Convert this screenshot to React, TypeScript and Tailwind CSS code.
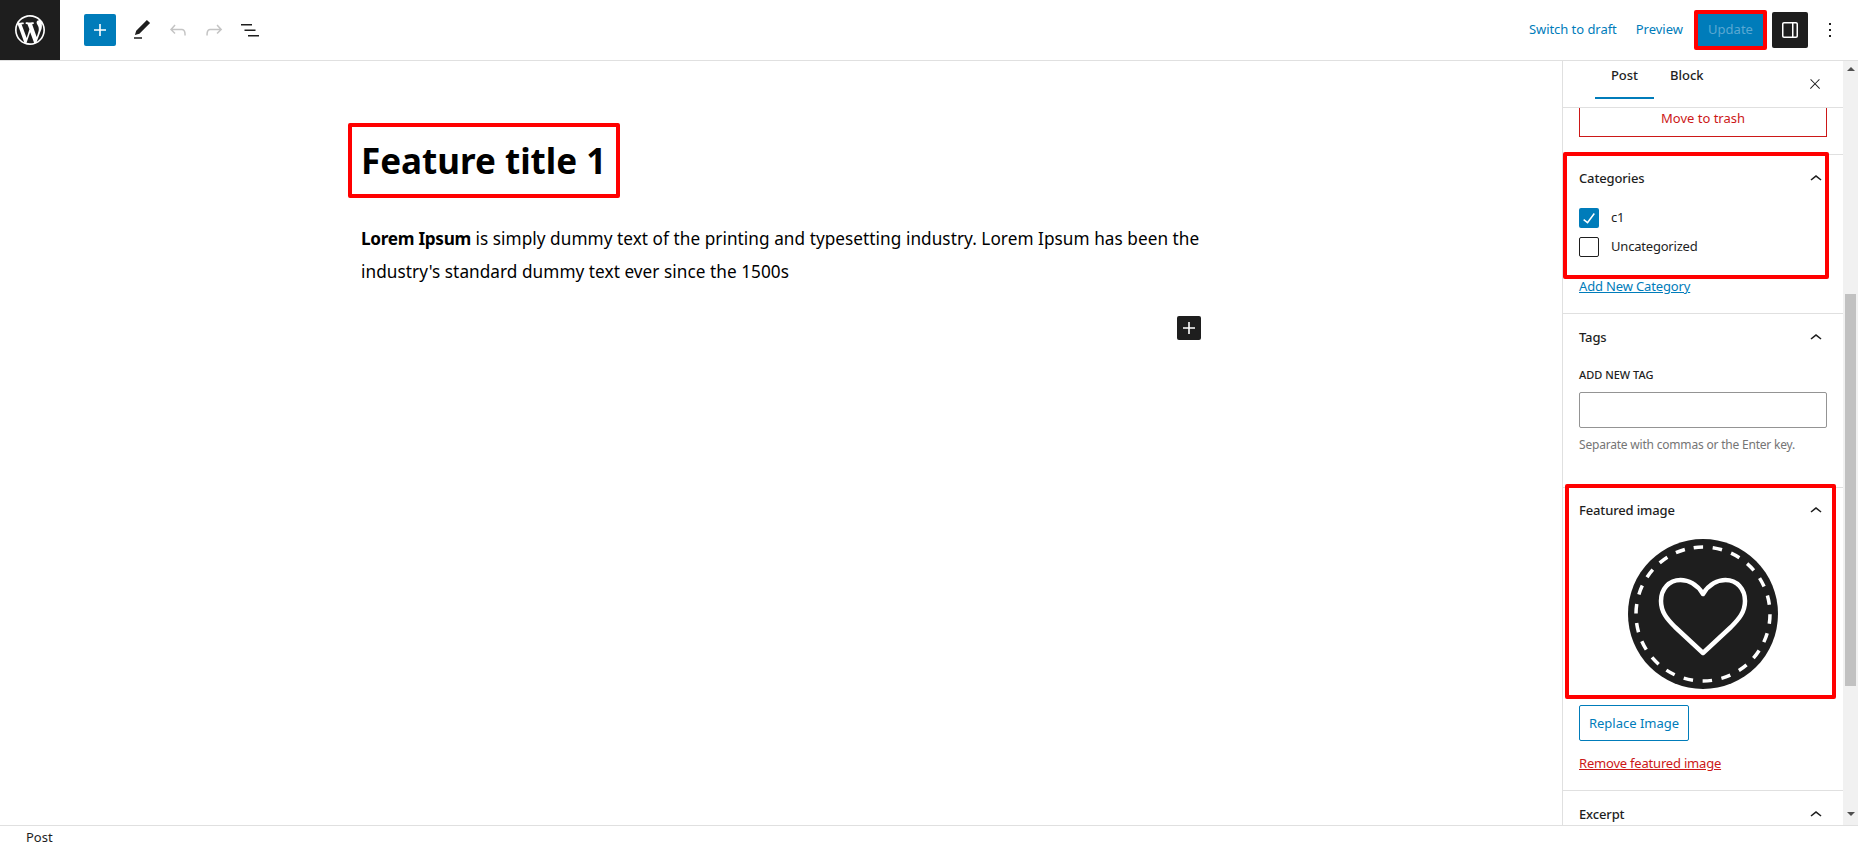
import { ReactNode } from "react"

const P = {
  wp: "M20 10c0-5.51-4.49-10-10-10C4.48 0 0 4.49 0 10c0 5.52 4.48 10 10 10 5.51 0 10-4.48 10-10zM7.78 15.37L4.37 6.22c.55-.02 1.17-.08 1.17-.08.5-.06.44-1.13-.06-1.11 0 0-1.45.11-2.37.11-.18 0-.37 0-.58-.01C4.12 2.69 6.87 1.11 10 1.11c2.33 0 4.45.87 6.05 2.34-.68-.11-1.65.39-1.65 1.58 0 .74.45 1.36.9 2.1.35.61.55 1.36.55 2.46 0 1.49-1.4 5-1.4 5l-3.03-8.37c.54-.02.82-.17.82-.17.5-.05.44-1.25-.06-1.22 0 0-1.44.12-2.38.12-.87 0-2.33-.12-2.33-.12-.5-.03-.56 1.2-.06 1.22l.92.08 1.26 3.41zM17.41 10c.24-.64.74-1.87.43-4.25.7 1.29 1.05 2.71 1.05 4.25 0 3.29-1.73 6.24-4.4 7.78.97-2.59 1.94-5.2 2.92-7.78zM6.1 18.09C3.12 16.65 1.11 13.53 1.11 10c0-1.3.23-2.48.72-3.59C3.25 10.3 4.67 14.2 6.1 18.09zm4.03-6.63l2.58 6.98c-.86.29-1.76.45-2.71.45-.79 0-1.57-.11-2.29-.33.81-2.38 1.62-4.74 2.42-7.1z",
  plus: "M18 11.2h-5.2V6h-1.6v5.2H6v1.6h5.2V18h1.6v-5.2H18z",
  pen: "M20.1 5.1L16.9 2 6.2 12.7l-1.3 4.4 4.5-1.3L20.1 5.1zM4 20.8h8v-1.5H4v1.5z",
  undo: "M18.3 11.7c-.6-.6-1.4-.9-2.3-.9H6.7l2.9-3.3-1.1-1-4.5 5L8.5 16l1-1-2.7-2.7H16c.5 0 .9.2 1.3.5 1 1 1 3.4 1 4.5v.3h1.5v-.2c0-1.5 0-4.3-1.5-5.7z",
  redo: "M15.6 6.5l-1.1 1 2.9 3.3H8c-.9 0-1.7.3-2.3.9-1.4 1.5-1.4 4.2-1.4 5.6v.2h1.5v-.3c0-1.1 0-3.5 1-4.5.3-.3.7-.5 1.3-.5h9.2L14.5 15l1.1 1.1 4.6-4.6-4.6-5z",
  list: "M3 6h11v1.5H3V6zm3.5 5.5h11V13h-11v-1.5zM21 17H10v1.5h11V17z",
  side: "M18 4H6c-1.1 0-2 .9-2 2v12c0 1.1.9 2 2 2h12c1.1 0 2-.9 2-2V6c0-1.1-.9-2-2-2zm-4 14.5H6c-.3 0-.5-.2-.5-.5V6c0-.3.2-.5.5-.5h8v13zm4.5-.5c0 .3-.2.5-.5.5h-2.5v-13H18c.3 0 .5.2.5.5v12z",
  dots: "M13 19h-2v-2h2v2zm0-6h-2v-2h2v2zm0-6h-2V5h2v2z",
  close: "M13 11.8l6.1-6.3-1-1-6.1 6.2-6.1-6.2-1 1 6.1 6.3-6.5 6.7 1 1 6.5-6.6 6.5 6.6 1-1z",
  up: "M6.5 12.4L12 8l5.5 4.4-.9 1.2L12 10l-4.5 3.6-1-1.2z",
  check: "M16.7 7.1l-6.3 8.5-3.3-2.5-.9 1.2 4.5 3.4L17.9 8z",
}

function Icon({ d, size = 24, className = "" }: { d: string; size?: number; className?: string }) {
  return (
    <svg viewBox="0 0 24 24" width={size} height={size} className={className} fill="currentColor">
      <path d={d} />
    </svg>
  )
}

function RedBox({ className }: { className: string }) {
  return <div className={`pointer-events-none absolute rounded-[2px] border-[4px] border-[#ff0000] ${className}`} />
}

function PanelHead({ title, className = "" }: { title: string; className?: string }) {
  return (
    <div className={`flex items-center justify-between ${className}`}>
      <span className="text-[13px] font-medium tracking-[-0.15px] text-[#1e1e1e]">{title}</span>
      <Icon d={P.up} className="mr-[-1px] text-[#1e1e1e]" />
    </div>
  )
}

function Check({ label, checked }: { label: string; checked?: boolean }) {
  return (
    <div className="flex h-5 items-center gap-3">
      {checked ? (
        <span className="flex h-5 w-5 items-center justify-center rounded-[2px] bg-[#007cba] text-white">
          <Icon d={P.check} size={24} className="shrink-0" />
        </span>
      ) : (
        <span className="h-5 w-5 rounded-[2px] border border-[#1e1e1e] bg-white" />
      )}
      <span className="text-[13px] tracking-[-0.2px] text-[#1e1e1e]">{label}</span>
    </div>
  )
}

function Section({ children, className = "" }: { children: ReactNode; className?: string }) {
  return <section className={`border-b border-[#e0e0e0] px-4 ${className}`}>{children}</section>
}

function Badge() {
  return (
    <svg viewBox="0 0 150 150" width={150} height={150}>
      <circle cx="75" cy="75" r="75" fill="#1e1e1e" />
      <circle cx="75" cy="75" r="67" fill="none" stroke="#fff" strokeWidth="3.5" strokeDasharray="9.5 9.63" transform="rotate(-98 75 75)" />
      <path
        d="M75 55C69 45 60 41 52.500 41 41 41 33 50 33 62c0 11 6 18 14 26l28 26 28-26c8-8 14-15 14-26 0-12-8-21-19.500-21-7.500 0-16.500 4-22.500 14z"
        fill="none"
        stroke="#fff"
        strokeWidth="4.5"
        strokeLinejoin="round"
      />
    </svg>
  )
}

export default function App() {
  return (
    <div className="relative flex h-[850px] w-full flex-col overflow-hidden bg-white font-['Noto_Sans',sans-serif] text-[#1e1e1e]">
      <header className="flex h-[61px] shrink-0 items-center border-b border-[#e0e0e0] pb-px">
        <div className="flex h-[60px] w-[60px] items-center justify-center bg-[#1e1e1e] text-white">
          <svg viewBox="0 0 20 20" width={30} height={30} fill="currentColor">
            <path d={P.wp} />
          </svg>
        </div>
        <div className="ml-6 flex h-8 w-8 items-center justify-center rounded-[2px] bg-[#007cba] text-white">
          <Icon d={P.plus} />
        </div>
        <Icon d={P.pen} className="ml-[14px] text-[#1e1e1e]" />
        <Icon d={P.undo} className="ml-3 text-[#c4c4c4]" />
        <Icon d={P.redo} className="ml-3 text-[#c4c4c4]" />
        <Icon d={P.list} className="ml-3 text-[#1e1e1e]" />
        <div className="ml-auto flex items-center">
          <span className="text-[13px] tracking-[-0.05px] text-[#007cba]">Switch to draft</span>
          <span className="ml-[19px] text-[13px] text-[#007cba]">Preview</span>
          <span className="ml-[15px] flex h-9 w-[68px] items-center justify-center rounded-[2px] bg-[#007cba] pr-[3px] text-[13px] text-[#5aa8d2]">
            Update
          </span>
          <span className="ml-[6px] flex h-9 w-9 items-center justify-center rounded-[2px] bg-[#1e1e1e] text-white">
            <Icon d={P.side} />
          </span>
          <Icon d={P.dots} className="ml-[10px] mr-4 text-[#1e1e1e]" />
        </div>
      </header>

      <div className="flex min-h-0 flex-1">
        <main className="min-w-0 flex-1 pl-[361px] pt-[78px]">
          <div className="w-[840px]">
            <h1 className="text-[35px] font-bold leading-[44px] text-black">Feature title 1</h1>
            <p className="mt-[39px] text-[17.2px] leading-[33px] tracking-[0.05px] text-black">
              <strong className="font-bold tracking-[-0.3px]">Lorem Ipsum</strong> is simply dummy text of the printing
              and typesetting industry. Lorem Ipsum has been the
              <br />
              industry's standard dummy text ever since the 1500s
            </p>
            <div className="mt-[28px] flex justify-end">
              <span className="flex h-6 w-6 items-center justify-center rounded-[2px] bg-[#1e1e1e] text-white">
                <Icon d={P.plus} />
              </span>
            </div>
          </div>
        </main>

        <aside className="flex w-[296px] shrink-0 border-l border-[#e0e0e0]">
          <div className="min-w-0 flex-1 overflow-hidden">
            <div className="relative flex h-[47px] border-b border-[#e0e0e0] pl-[32px]">
              <div className="h-[38px] w-[59px] border-b-2 border-[#007cba] pt-[5px] text-center text-[13px] font-medium">
                Post
              </div>
              <div className="ml-[16px] pt-[5px] text-[13px] font-medium">Block</div>
              <Icon d={P.close} size={16} className="ml-auto mr-[20px] mt-[15px]" />
            </div>
            <Section className="h-[47px]">
              <div className="flex h-[29px] items-center justify-center border border-t-0 border-[#cc1818] pb-[7px] text-[13px] text-[#cc1818]">
                Move to trash
              </div>
            </Section>
            <Section className="h-[159px]">
              <PanelHead title="Categories" className="h-[48px]" />
              <div className="mt-[5px] flex flex-col gap-[9px]">
                <Check label="c1" checked />
                <Check label="Uncategorized" />
              </div>
              <a className="mt-[19px] block text-[13px] leading-[20px] tracking-[-0.15px] text-[#007cba] underline">
                Add New Category
              </a>
            </Section>
            <Section className="h-[174px]">
              <PanelHead title="Tags" className="h-[47px]" />
              <div className="mt-[6px] text-[11px] font-medium uppercase leading-[16px]">Add new tag</div>
              <div className="mt-[9px] h-9 rounded-[2px] border border-[#949494]" />
              <p className="mt-[9px] text-[12px] leading-[16px] tracking-[-0.2px] text-[#757575]">
                Separate with commas or the Enter key.
              </p>
            </Section>
            <Section className="h-[303px]">
              <PanelHead title="Featured image" className="h-[45px]" />
              <div className="mt-[6px] flex justify-center">
                <Badge />
              </div>
              <div className="mt-[16px] flex h-9 w-[110px] items-center justify-center rounded-[2px] border border-[#007cba] pt-px text-[13px] text-[#007cba]">
                Replace Image
              </div>
              <a className="mt-[12px] block text-[13px] leading-[20px] tracking-[-0.2px] text-[#cc1818] underline">
                Remove featured image
              </a>
            </Section>
            <div className="px-4">
              <PanelHead title="Excerpt" className="h-[48px]" />
            </div>
          </div>

          <div className="flex w-[15px] shrink-0 flex-col items-center bg-[#f1f1f1]">
            <span className="mt-[6px] h-0 w-0 border-x-[4px] border-b-[4px] border-x-transparent border-b-[#505050]" />
            <span className="mt-[223px] h-[392px] w-[11px] bg-[#c1c1c1]" />
            <span className="mt-[126px] h-0 w-0 border-x-[4px] border-t-[4px] border-x-transparent border-t-[#505050]" />
          </div>
        </aside>
      </div>

      <footer className="flex h-[25px] shrink-0 items-center border-t border-[#e0e0e0] pl-[26px] text-[13px] text-[#1e1e1e]">
        Post
      </footer>

      <RedBox className="left-[348px] top-[123px] h-[75px] w-[272px]" />
      <RedBox className="left-[1694px] top-[10px] h-[40px] w-[73px]" />
      <RedBox className="left-[1563px] top-[152px] h-[127px] w-[266px]" />
      <RedBox className="left-[1565px] top-[484px] h-[215px] w-[271px]" />
    </div>
  )
}
